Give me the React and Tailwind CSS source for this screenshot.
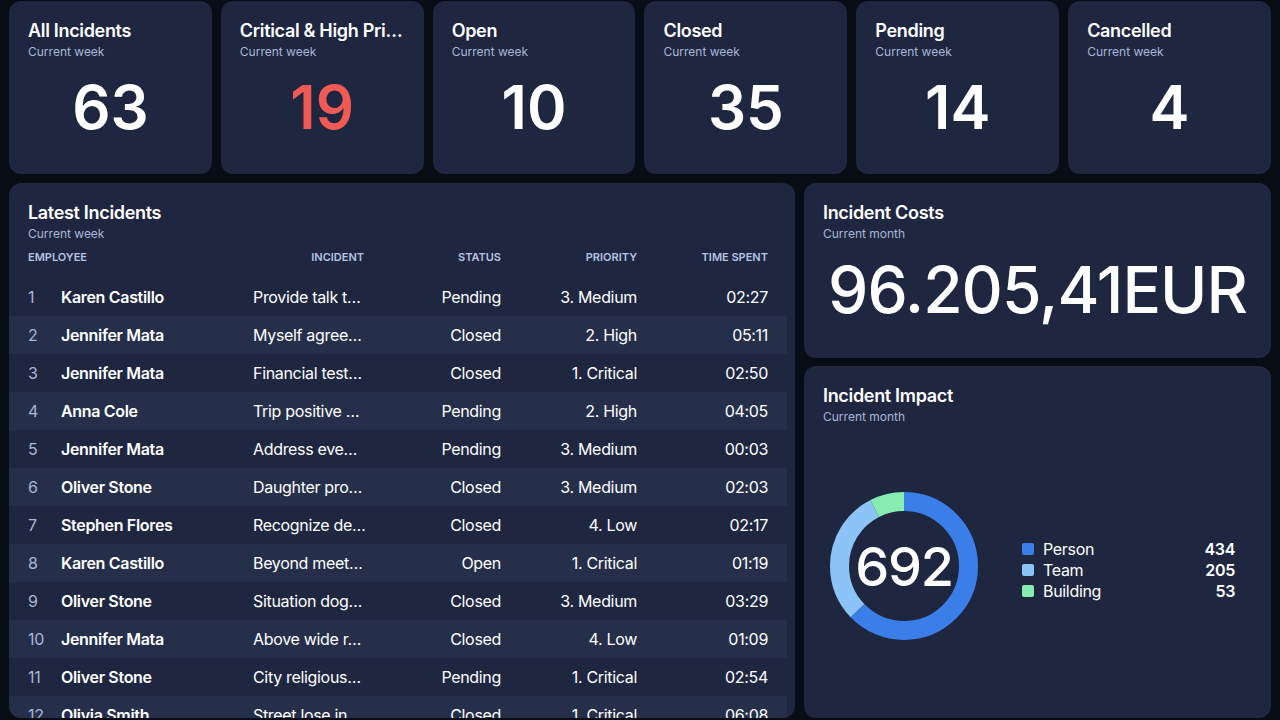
import React from "react";

const stats = [
  { title: "All Incidents", value: "63" },
  { title: "Critical & High Priority", value: "19", danger: true },
  { title: "Open", value: "10" },
  { title: "Closed", value: "35" },
  { title: "Pending", value: "14" },
  { title: "Cancelled", value: "4" },
];

const incidents = [
  ["Karen Castillo", "Provide talk t…", "Pending", "3. Medium", "02:27"],
  ["Jennifer Mata", "Myself agree…", "Closed", "2. High", "05:11"],
  ["Jennifer Mata", "Financial test…", "Closed", "1. Critical", "02:50"],
  ["Anna Cole", "Trip positive …", "Pending", "2. High", "04:05"],
  ["Jennifer Mata", "Address eve…", "Pending", "3. Medium", "00:03"],
  ["Oliver Stone", "Daughter pro…", "Closed", "3. Medium", "02:03"],
  ["Stephen Flores", "Recognize de…", "Closed", "4. Low", "02:17"],
  ["Karen Castillo", "Beyond meet…", "Open", "1. Critical", "01:19"],
  ["Oliver Stone", "Situation dog…", "Closed", "3. Medium", "03:29"],
  ["Jennifer Mata", "Above wide r…", "Closed", "4. Low", "01:09"],
  ["Oliver Stone", "City religious…", "Pending", "1. Critical", "02:54"],
  ["Olivia Smith", "Street lose in…", "Closed", "1. Critical", "06:08"],
];

const impact = [
  { label: "Person", value: 434, color: "#3b7ee8", cls: "bg-[#3b7ee8]" },
  { label: "Team", value: 205, color: "#8cc4f7", cls: "bg-[#8cc4f7]" },
  { label: "Building", value: 53, color: "#86ecb0", cls: "bg-[#86ecb0]" },
];

const cols = "grid grid-cols-[33px_192px_111px_137px_136px_131px]";

function CardHeader({ title, subtitle }) {
  return (
    <div>
      <h2 className="text-[18px] leading-6 font-semibold text-white truncate">
        {title}
      </h2>
      <p className="text-[12px] leading-[18px] tracking-normal text-[#a9b7d6]">
        {subtitle}
      </p>
    </div>
  );
}

function Donut() {
  const size = 148;
  const stroke = 19;
  const r = (size - stroke) / 2;
  const c = 2 * Math.PI * r;
  const total = impact.reduce((s, i) => s + i.value, 0);
  let offset = 0;

  return (
    <div className="relative w-[148px] h-[148px]">
      <svg width={size} height={size} className="-rotate-90">
        {impact.map((item) => {
          const len = (item.value / total) * c;
          const el = (
            <circle
              key={item.label}
              cx={size / 2}
              cy={size / 2}
              r={r}
              fill="none"
              stroke={item.color}
              strokeWidth={stroke}
              strokeDasharray={`${len} ${c - len}`}
              strokeDashoffset={-offset}
            />
          );
          offset += len;
          return el;
        })}
      </svg>
      <div className="absolute inset-0 flex items-center justify-center text-[54px] font-medium text-white tracking-tight">
        {total}
      </div>
    </div>
  );
}

export default function App() {
  return (
    <div
      className="h-screen overflow-hidden bg-[#060d15] px-[9px] pt-[1px] pb-[2px] flex flex-col gap-[9px] tracking-[-0.02em]"
      style={{ fontFamily: "Inter, 'Noto Sans', sans-serif" }}
    >
      {/* Stat cards */}
      <div className="grid grid-cols-6 gap-[9px] h-[173px] shrink-0">
        {stats.map((s) => (
          <div
            key={s.title}
            className="bg-[#1e2640] rounded-xl px-[19px] pt-[18px] min-w-0"
          >
            <CardHeader title={s.title} subtitle="Current week" />
            <div
              className={`mt-[16px] text-center text-[60px] leading-none font-semibold tracking-normal ${
                s.danger ? "text-[#ef5b54]" : "text-white"
              }`}
            >
              {s.value}
            </div>
          </div>
        ))}
      </div>

      <div className="flex-1 min-h-0 grid grid-cols-[786px_1fr] gap-[9px]">
        {/* Latest incidents */}
        <div className="bg-[#1e2640] rounded-xl pt-[18px] overflow-hidden">
          <div className="px-[19px]">
            <CardHeader title="Latest Incidents" subtitle="Current week" />
          </div>
          <div className={`${cols} px-[19px] mt-[6px] text-[11px] leading-4 font-semibold uppercase tracking-normal text-[#b5c3e3]`}>
            <div className="col-span-2">Employee</div>
            <div className="text-right">Incident</div>
            <div className="text-right">Status</div>
            <div className="text-right">Priority</div>
            <div className="text-right">Time Spent</div>
          </div>
          <div className="mt-[13px] mr-2">
            {incidents.map((row, i) => (
              <div
                key={i}
                className={`${cols} px-[19px] h-[38px] items-center text-[16px] text-white ${
                  i % 2 === 1 ? "bg-[#252f4a]" : ""
                }`}
              >
                <div className="text-[#a9b7d6]">{i + 1}</div>
                <div className="font-semibold whitespace-nowrap">{row[0]}</div>
                <div className="whitespace-nowrap">{row[1]}</div>
                <div className="text-right">{row[2]}</div>
                <div className="text-right">{row[3]}</div>
                <div className="text-right">{row[4]}</div>
              </div>
            ))}
          </div>
        </div>

        {/* Right column */}
        <div className="flex flex-col gap-2 min-h-0">
          <div className="bg-[#1e2640] rounded-xl px-[19px] pt-[18px] h-[175px] shrink-0">
            <CardHeader title="Incident Costs" subtitle="Current month" />
            <div className="mt-[15px] text-center text-[64px] leading-none font-medium text-white tracking-[-0.015em]">
              96.205,41EUR
            </div>
          </div>

          <div className="bg-[#1e2640] rounded-xl px-[19px] pt-[18px] flex-1">
            <CardHeader title="Incident Impact" subtitle="Current month" />
            <div className="mt-[66px] ml-[7px] flex items-center">
              <Donut />
              <div className="ml-[44px] w-[213px] flex flex-col pt-2">
                {impact.map((item) => (
                  <div
                    key={item.label}
                    className="flex items-center h-[21px] text-[16px] text-white"
                  >
                    <span className={`w-3 h-3 rounded-[2px] ${item.cls}`} />
                    <span className="ml-[9px] flex-1">{item.label}</span>
                    <span className="font-semibold">{item.value}</span>
                  </div>
                ))}
              </div>
            </div>
          </div>
        </div>
      </div>
    </div>
  );
}
